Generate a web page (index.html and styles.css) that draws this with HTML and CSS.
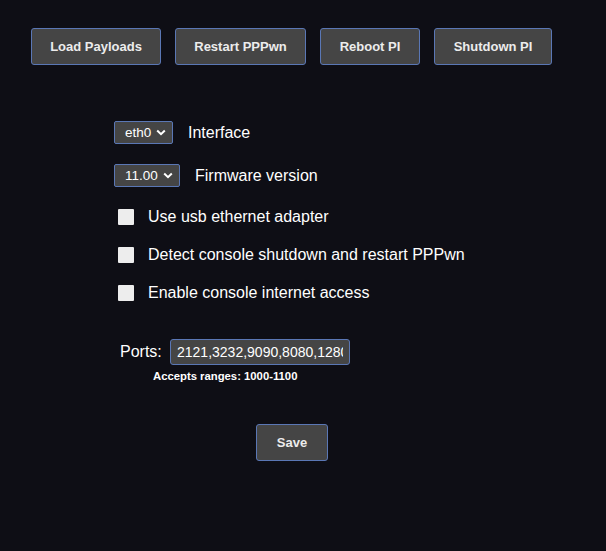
FILE: index.html
```html
<!DOCTYPE html>
<html>
<head>
<meta charset="utf-8">
<link rel="stylesheet" href="styles.css">
</head>
<body>
<div class="actions">
  <button class="btn w-load">Load Payloads</button>
  <button class="btn w-restart">Restart PPPwn</button>
  <button class="btn w-reboot">Reboot PI</button>
  <button class="btn w-shutdown">Shutdown PI</button>
</div>
<div class="form">
  <div class="row sel-row">
    <select class="sel sel-eth"><option>eth0</option></select>
    <span class="label">Interface</span>
  </div>
  <div class="row sel-row second">
    <select class="sel sel-fw"><option>11.00</option></select>
    <span class="label label-fw">Firmware version</span>
  </div>
  <div class="checks">
    <label class="check"><input type="checkbox" class="box"><span>Use usb ethernet adapter</span></label>
    <label class="check"><input type="checkbox" class="box"><span>Detect console shutdown and restart PPPwn</span></label>
    <label class="check"><input type="checkbox" class="box"><span>Enable console internet access</span></label>
  </div>
  <div class="ports">
    <span class="ports-label">Ports:</span>
    <input class="ports-input" type="text" value="2121,3232,9090,8080,12800,1337">
  </div>
  <div class="hint">Accepts ranges: 1000-1100</div>
</div>
<div class="save-wrap">
  <button class="btn save">Save</button>
</div>
</body>
</html>
```
FILE: styles.css
```css
html, body {
  margin: 0;
  padding: 0;
  background: #0e0e15;
  color: #ffffff;
  font-family: "Liberation Sans", Arial, sans-serif;
  height: 100%;
}
.actions {
  display: flex;
  gap: 14px;
  padding: 28px 0 0 31px;
}
.btn {
  height: 37px;
  background: #454545;
  color: #ececec;
  border: 1px solid #5a77b5;
  border-radius: 3px;
  font-family: "Liberation Sans", Arial, sans-serif;
  font-weight: bold;
  font-size: 13px;
  padding: 0;
}
.w-load { width: 130px; }
.w-restart { width: 131px; }
.w-reboot { width: 100px; }
.w-shutdown { width: 118px; }
.form {
  padding-left: 114px;
  margin-top: 56px;
}
.row {
  display: flex;
  align-items: center;
}
.second { margin-top: 20px; }
.sel {
  appearance: none;
  -webkit-appearance: none;
  height: 23px;
  background-color: #454545;
  color: #ffffff;
  border: 1px solid #5a77b5;
  border-radius: 2px;
  font-family: "Liberation Sans", Arial, sans-serif;
  font-size: 13.5px;
  padding: 0 0 0 10px;
  background-image: url("data:image/svg+xml;utf8,<svg xmlns='http://www.w3.org/2000/svg' width='10' height='7' viewBox='0 0 10 7'><path d='M1.2 1.5 L5 5.2 L8.8 1.5' fill='none' stroke='white' stroke-width='2'/></svg>");
  background-repeat: no-repeat;
  background-position: right 6px center;
}
.sel-eth { width: 59px; }
.sel-fw { width: 66px; }
.label {
  font-size: 16px;
  margin-left: 15px;
}
.checks {
  margin-top: 21px;
  display: flex;
  flex-direction: column;
  gap: 20px;
}
.check {
  display: flex;
  align-items: center;
  height: 18px;
  font-size: 16px;
}
.box {
  appearance: none;
  -webkit-appearance: none;
  width: 16px;
  height: 16px;
  margin: 0 14px 0 4px;
  background: #ededed;
  border: none;
  border-radius: 1px;
}
.ports {
  display: flex;
  align-items: center;
  margin-top: 37px;
  padding-left: 6px;
}
.ports-label {
  font-size: 16px;
  width: 50px;
}
.ports-input {
  width: 180px;
  height: 26px;
  box-sizing: border-box;
  background: #454545;
  color: #ffffff;
  border: 1px solid #5a77b5;
  border-radius: 3px;
  font-family: "Liberation Sans", Arial, sans-serif;
  font-size: 14px;
  padding: 0 6px;
}
.hint {
  font-size: 11.3px;
  font-weight: bold;
  margin-top: 5px;
  padding-left: 39px;
}
.save-wrap {
  padding-left: 256px;
  margin-top: 42px;
}
.save { width: 72px; height: 37px; }
```
